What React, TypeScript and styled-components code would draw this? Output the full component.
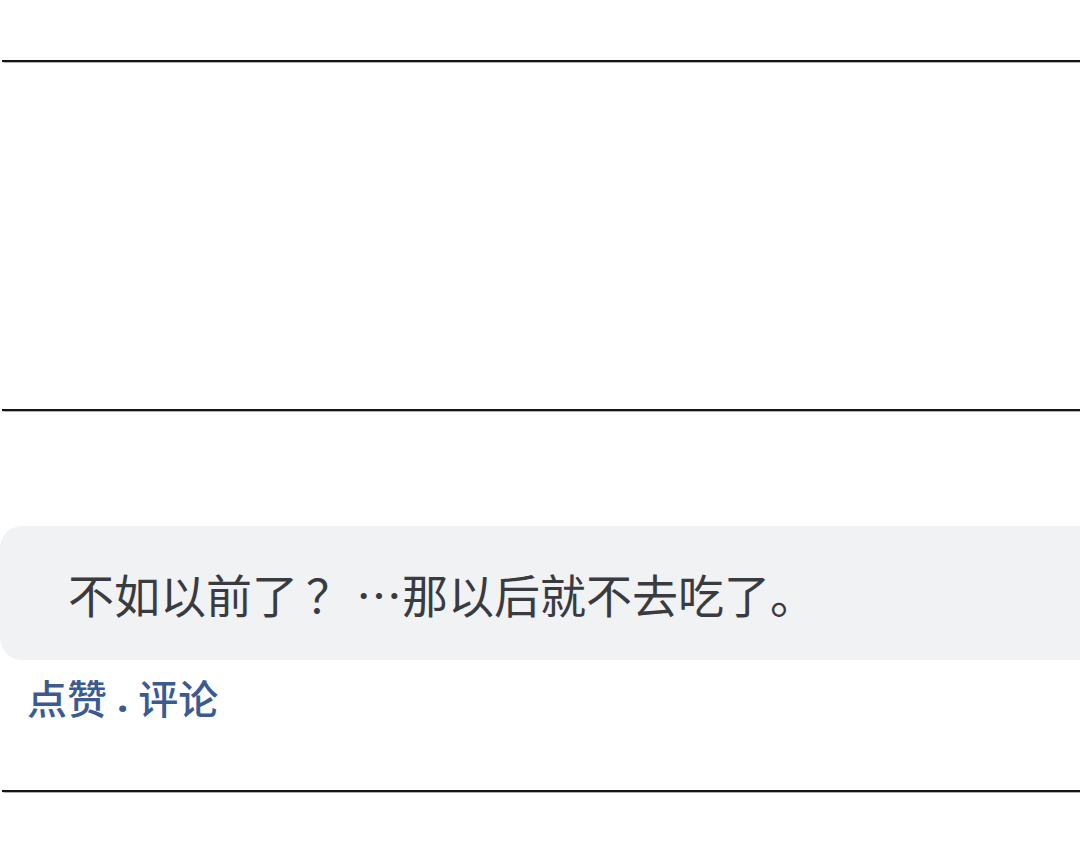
import React from "react";
import styled, { createGlobalStyle } from "styled-components";

const GlobalStyle = createGlobalStyle`
  html, body {
    margin: 0;
    padding: 0;
    background: #ffffff;
  }
  body {
    font-family: "Noto Sans CJK SC", "Noto Sans", sans-serif;
  }
`;

const Page = styled.div`
  width: 1080px;
  height: 844px;
  overflow: hidden;
  background: #ffffff;
  display: flex;
  flex-direction: column;
`;

const Divider = styled.div`
  height: 2px;
  margin-left: 2px;
  background: #141414;
  box-shadow: 0 0 1px 0.5px rgba(0, 0, 0, 0.3);
  flex-shrink: 0;
`;

const Blank = styled.div<{ $h: number }>`
  height: ${(p) => p.$h}px;
  flex-shrink: 0;
`;

const CommentBlock = styled.section`
  display: flex;
  flex-direction: column;
  padding-top: 115px;
  height: 379px;
  box-sizing: border-box;
  flex-shrink: 0;
`;

const Bubble = styled.div`
  height: 134px;
  margin-right: -40px;
  padding-left: 68px;
  display: flex;
  align-items: center;
  background: #f1f2f4;
  border-radius: 22px;
  box-sizing: border-box;
`;

const CommentText = styled.p`
  margin: 0;
  font-size: 46px;
  line-height: 1;
  color: #393b40;
  white-space: nowrap;
`;

const Pause = styled.span`
  margin-left: 8px;
  margin-right: 4px;
`;

const Actions = styled.div`
  margin-top: 13px;
  padding-left: 27px;
  display: flex;
  align-items: center;
  gap: 10px;
  font-size: 40px;
  line-height: 48px;
  font-weight: 500;
  color: #3b5a92;
`;

const ActionLink = styled.span`
  white-space: nowrap;
`;

const Dot = styled.span`
  font-family: "Noto Sans", sans-serif;
  font-weight: 700;
`;

export default function App() {
  return (
    <>
      <GlobalStyle />
      <Page>
        <Blank $h={60} />
        <Divider />
        <Blank $h={347} />
        <Divider />
        <CommentBlock>
          <Bubble>
            <CommentText>
              不如以前了<Pause>？</Pause>…那以后就不去吃了。
            </CommentText>
          </Bubble>
          <Actions>
            <ActionLink>点赞</ActionLink>
            <Dot>.</Dot>
            <ActionLink>评论</ActionLink>
          </Actions>
        </CommentBlock>
        <Divider />
      </Page>
    </>
  );
}
